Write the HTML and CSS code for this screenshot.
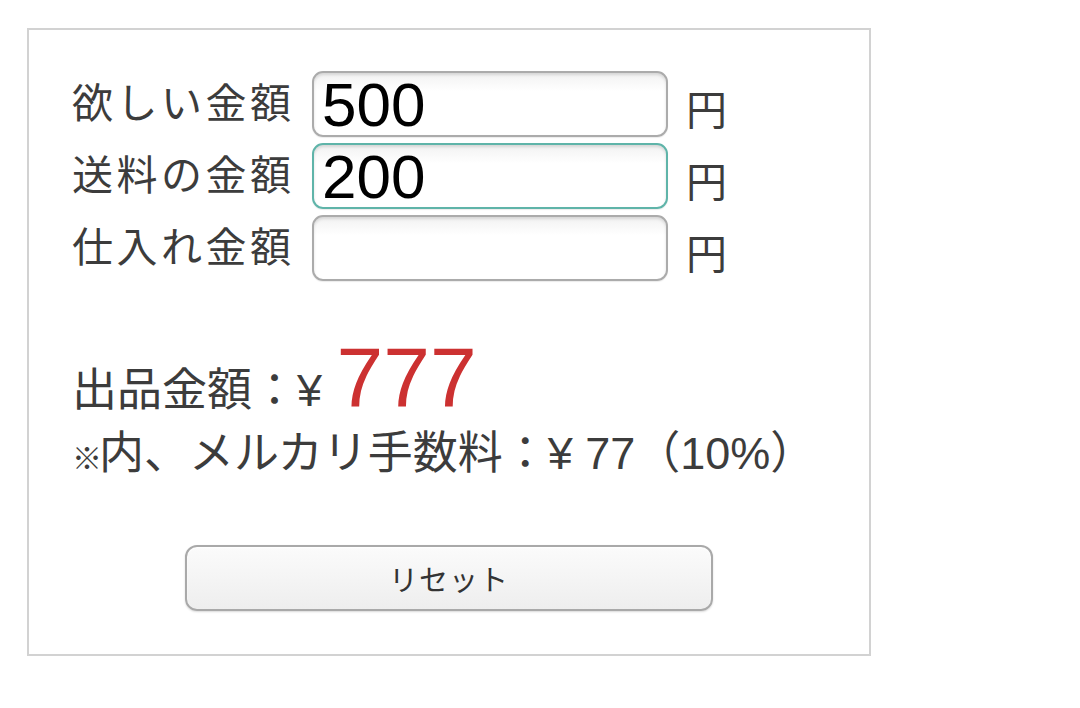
FILE: index.html
```html
<!DOCTYPE html>
<html>
<head>
    <title>メルカリ 出品金額計算</title>
    <link rel="stylesheet" href="styles.css">
</head>
<body>
    <div class="panel">
        <div class="row">
            <span class="label">欲しい金額</span>
            <input type="text" class="amount" value="500">
            <span class="unit">円</span>
        </div>
        <div class="row">
            <span class="label">送料の金額</span>
            <input type="text" class="amount focused" value="200">
            <span class="unit">円</span>
        </div>
        <div class="row">
            <span class="label">仕入れ金額</span>
            <input type="text" class="amount" value="">
            <span class="unit">円</span>
        </div>

        <div class="result">
            <div class="price-line">出品金額：¥ <span class="price">777</span></div>
            <div class="fee-line"><span class="note">※</span>内、メルカリ手数料：¥ 77（10%）</div>
        </div>

        <div class="actions">
            <button class="reset-btn">リセット</button>
        </div>
    </div>
</body>
</html>
```

FILE: styles.css
```css
body {
    margin: 0;
    background: #fff;
    font-family: "Liberation Sans", "Noto Sans CJK JP", sans-serif;
    color: #3c3c3c;
}

.panel {
    width: 844px;
    height: 628px;
    box-sizing: border-box;
    margin: 28px 0 0 27px;
    border: 2px solid #d2d2d2;
    padding: 41px 0 0 43px;
}

.row {
    display: flex;
    align-items: center;
    height: 66px;
    margin-bottom: 6px;
}

.label {
    font-family: "Noto Sans CJK JP", sans-serif;
    font-size: 41px;
    letter-spacing: 3.5px;
    width: 224px;
    margin-right: 16px;
    margin-top: -8px;
    white-space: nowrap;
}

.amount {
    width: 356px;
    height: 66px;
    box-sizing: border-box;
    border: 2px solid #ababab;
    border-radius: 11px;
    background: linear-gradient(#f2f2f2, #fff 30%);
    box-shadow: inset 0 2px 3px rgba(0,0,0,0.12), 0 1px 1px rgba(0,0,0,0.08);
    padding: 0 0 0 8px;
    font-family: "Liberation Sans", sans-serif;
    font-size: 62px;
    color: #000;
    outline: none;
}

.amount.focused {
    border-color: #5fb4a9;
}

.unit {
    font-family: "Noto Sans CJK JP", sans-serif;
    font-size: 41px;
    margin-left: 18px;
    margin-top: 6px;
}

.result {
    margin-top: 60px;
    font-size: 45px;
}

.price-line {
    line-height: 72px;
    white-space: nowrap;
}

.price {
    color: #cc3131;
    font-size: 84px;
    margin-left: 2px;
}

.fee-line {
    line-height: 54px;
    white-space: nowrap;
}

.note {
    font-size: 30px;
    font-weight: bold;
    letter-spacing: -3px;
}

.actions {
    margin: 59px 0 0 -43px;
    display: flex;
    justify-content: center;
}

.reset-btn {
    width: 528px;
    height: 66px;
    border: 2px solid #a9a9a9;
    border-radius: 12px;
    background: linear-gradient(#fbfbfb, #eeeeee);
    box-shadow: inset 0 1px 2px #fff, 0 1px 2px rgba(0,0,0,0.15);
    font-family: "Noto Sans CJK JP", sans-serif;
    font-size: 29px;
    color: #333;
    letter-spacing: 1px;
}
```
